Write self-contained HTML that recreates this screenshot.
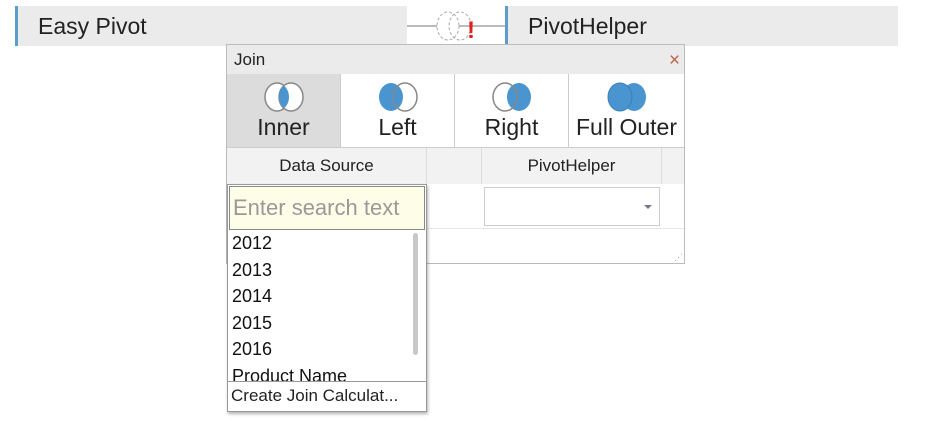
<!DOCTYPE html>
<html><head><style>
body{margin:0;width:940px;height:443px;background:#fff;position:relative;overflow:hidden;font-family:"Liberation Sans",sans-serif;color:#222}
.a{position:absolute}
.bar{background:#ebebeb;border-left:3px solid #5a9ec9;height:40px;top:6px;font-size:23px;line-height:40px;padding-left:20px;box-sizing:border-box}
.btn{top:74px;height:74px;border-right:1px solid #ccc;text-align:center;box-sizing:border-box}
.btn svg{position:absolute;left:50%;margin-left:-23px;top:7px}
.btn span{position:absolute;left:0;right:0;top:40px;font-size:23px}
.hd{top:148px;height:36px;background:#f2f2f2;border-right:1px solid #ddd;box-sizing:border-box;font-size:17px;line-height:36px;text-align:center}
.it{left:4px;font-size:18px;color:#111}
</style></head><body>
<div class="a bar" style="left:15px;width:392px">Easy Pivot</div>
<div class="a bar" style="left:505px;width:393px">PivotHelper</div>
<div class="a" style="left:407px;top:25px;width:98px;height:2px;background:#bbb"></div>
<svg class="a" style="left:432px;top:10px" width="50" height="32">
<ellipse cx="16" cy="16" rx="11" ry="14" fill="#fff" stroke="#aaa" stroke-dasharray="3 2"/><ellipse cx="28" cy="16" rx="11" ry="14" fill="none" stroke="#aaa" stroke-dasharray="3 2"/>
<text x="35" y="28" font-size="24" font-weight="bold" fill="#e02020" font-family="Liberation Sans">!</text></svg>

<div class="a" style="left:226px;top:44px;width:459px;height:220px;border:1px solid #bbb;box-sizing:border-box;background:#fff"></div>
<div class="a" style="left:227px;top:45px;width:457px;height:29px;background:#ebebeb;font-size:17px;line-height:29px;padding-left:7px;box-sizing:border-box">Join</div>
<div class="a" style="left:669px;top:50px;font-size:19px;color:#c0604a">×</div>

<div class="a btn" style="left:227px;width:114px;background:#dcdcdc"><svg width="46" height="32"><ellipse cx="16" cy="16" rx="12" ry="14" fill="#fff" stroke="#888" stroke-width="1.5"/><ellipse cx="30" cy="16" rx="12" ry="14" fill="#fff" stroke="#888" stroke-width="1.5"/><path d="M23 4.6 A12 14 0 0 1 23 27.4 A12 14 0 0 1 23 4.6Z" fill="#4a95d0"/></svg><span>Inner</span></div>
<div class="a btn" style="left:341px;width:114px"><svg width="46" height="32"><ellipse cx="16" cy="16" rx="12" ry="14" fill="#4a95d0"/><ellipse cx="30" cy="16" rx="12" ry="14" fill="none" stroke="#888" stroke-width="1.5"/></svg><span>Left</span></div>
<div class="a btn" style="left:455px;width:114px"><svg width="46" height="32"><ellipse cx="30" cy="16" rx="12" ry="14" fill="#4a95d0"/><ellipse cx="16" cy="16" rx="12" ry="14" fill="none" stroke="#888" stroke-width="1.5"/></svg><span>Right</span></div>
<div class="a btn" style="left:569px;width:115px;border-right:none"><svg width="46" height="32"><ellipse cx="16" cy="16" rx="12" ry="14" fill="#4a95d0"/><ellipse cx="30" cy="16" rx="12" ry="14" fill="#4a95d0"/><ellipse cx="16" cy="16" rx="12" ry="14" fill="none" stroke="#3a7fb8" stroke-width="1"/></svg><span>Full Outer</span></div>
<div class="a" style="left:227px;top:147px;width:457px;height:1px;background:#ccc"></div>

<div class="a hd" style="left:227px;width:200px">Data Source</div>
<div class="a hd" style="left:427px;width:55px"></div>
<div class="a hd" style="left:482px;width:180px">PivotHelper</div>
<div class="a hd" style="left:662px;width:22px;border:none"></div>
<div class="a" style="left:227px;top:228px;width:457px;height:1px;background:#e6e6e6"></div>
<div class="a" style="left:484px;top:187px;width:176px;height:39px;border:1px solid #ccc;box-sizing:border-box"></div>
<div class="a" style="left:644px;top:205px;width:0;height:0;border-left:4px solid transparent;border-right:4px solid transparent;border-top:4px solid #778"></div>
<div class="a" style="left:674px;top:252px;font-size:9px;color:#aaa">⋰</div>

<div class="a" style="left:227px;top:184px;width:200px;height:228px;background:#fff;border:1px solid #999;box-sizing:border-box;box-shadow:1px 2px 3px rgba(0,0,0,.3)">
<div class="a" style="left:1px;top:1px;width:196px;height:44px;background:#fefde8;border:1px solid #888;box-sizing:border-box;font-size:22px;line-height:42px;color:#999;padding-left:3px;white-space:nowrap;overflow:hidden">Enter search text</div>
<div class="a" style="left:185px;top:48px;width:5px;height:122px;background:#c8c8c8;border-radius:3px"></div>
<div class="a it" style="top:48px">2012</div>
<div class="a it" style="top:75px">2013</div>
<div class="a it" style="top:101px">2014</div>
<div class="a it" style="top:128px">2015</div>
<div class="a it" style="top:154px">2016</div>
<div class="a" style="left:0;top:180px;width:198px;height:16px;overflow:hidden"><div class="a it" style="top:1px">Product Name</div></div>
<div class="a" style="left:0;top:196px;width:198px;height:1px;background:#999"></div>
<div class="a" style="left:3px;top:201px;font-size:17px;color:#222;white-space:nowrap">Create Join Calculat...</div>
</div>
</body></html>
